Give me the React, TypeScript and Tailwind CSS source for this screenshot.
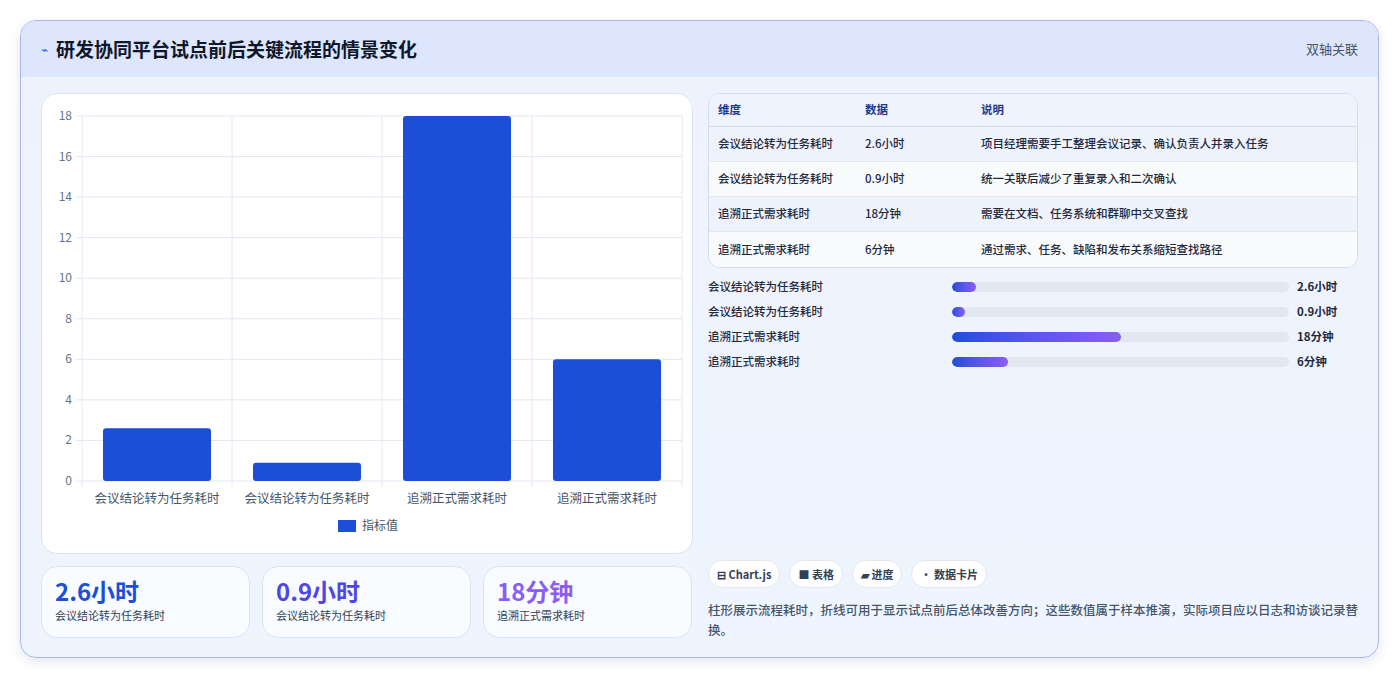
import React from "react";

const rows = [
  ["会议结论转为任务耗时", "2.6小时", "项目经理需要手工整理会议记录、确认负责人并录入任务", 2.6],
  ["会议结论转为任务耗时", "0.9小时", "统一关联后减少了重复录入和二次确认", 0.9],
  ["追溯正式需求耗时", "18分钟", "需要在文档、任务系统和群聊中交叉查找", 18],
  ["追溯正式需求耗时", "6分钟", "通过需求、任务、缺陷和发布关系缩短查找路径", 6],
] as const;

function Chart() {
  const L = 40, T = 22, W = 600, H = 365;
  const ticks = [0, 2, 4, 6, 8, 10, 12, 14, 16, 18];
  const y = (v: number) => T + H - (v / 18) * H;
  return (
    <svg width="652" height="460" className="block">
      {ticks.map((t) => (
        <g key={t}>
          <line x1={L - 6} x2={L + W} y1={y(t)} y2={y(t)} stroke="#e2e8f0" />
          <text x={L - 10} y={y(t) + 4} textAnchor="end" fontSize="12" fill="#64748b">{t}</text>
        </g>
      ))}
      {[0, 1, 2, 3, 4].map((i) => (
        <line key={i} x1={L + i * 150} x2={L + i * 150} y1={T} y2={T + H + 6} stroke="#e2e8f0" />
      ))}
      {rows.map((r, i) => (
        <g key={i}>
          <rect x={L + i * 150 + 21} y={y(r[3])} width={108} height={T + H - y(r[3])} rx="3" fill="#1d4ed8" />
          <text x={L + i * 150 + 75} y={409} textAnchor="middle" fontSize="12.5" fill="#475569">{r[0]}</text>
        </g>
      ))}
      <rect x={296} y={426} width={18} height={12} fill="#1d4ed8" />
      <text x={320} y={436} fontSize="12" fill="#475569">指标值</text>
    </svg>
  );
}

export default function App() {
  const f = { fontFamily: '"Noto Sans CJK SC", "Noto Sans", sans-serif' };
  return (
    <div style={f} className="w-[1399px] h-[679px] bg-white pt-5 px-5">
      <div className="rounded-2xl border border-[#a9b8e8] bg-gradient-to-b from-[#eef2fd] to-[#eef5ff] overflow-hidden shadow-[0_4px_12px_rgba(30,60,150,0.12)] h-[638px]">
        <div className="h-14 bg-[#dde6fc] flex items-center justify-between px-5">
          <div className="flex items-center gap-2">
            <span className="text-[#2563eb] text-xs">⌁</span>
            <span className="text-[19px] font-bold text-[#0f172a]">研发协同平台试点前后关键流程的情景变化</span>
          </div>
          <span className="text-[13px] text-[#475569]">双轴关联</span>
        </div>
        <div className="flex gap-[15px] px-5 pt-4">
          <div className="w-[652px]">
            <div className="bg-white rounded-2xl border border-[#dbe3f3] h-[461px]"><Chart /></div>
            <div className="flex gap-3 mt-3">
              {[["2.6小时", "会议结论转为任务耗时", "text-[#1d4ed8]"], ["0.9小时", "会议结论转为任务耗时", "text-[#4f46e5]"], ["18分钟", "追溯正式需求耗时", "text-[#8b5cf6]"]].map((s, i) => (
                <div key={i} className="w-[209px] h-[72px] bg-[#f8fbff] rounded-2xl border border-[#dbe3f3] px-[13px] pt-2">
                  <div className={`text-[24px] font-bold leading-8 ${s[2]}`}>{s[0]}</div>
                  <div className="text-[11px] text-[#334155]">{s[1]}</div>
                </div>
              ))}
            </div>
          </div>
          <div className="w-[653px] flex flex-col">
            <div className="rounded-xl border border-[#d3dcef] overflow-hidden bg-white text-[11.5px] text-[#1e293b]">
              <div className="flex h-[33px] items-center bg-[#eef3fd] border-b border-[#d3dcef] font-bold text-[#1e3a8a]">
                <div className="w-[156px] pl-[9px]">维度</div><div className="w-[116px]">数据</div><div>说明</div>
              </div>
              {rows.map((r, i) => (
                <div key={i} className={`flex h-[35px] items-center font-medium ${i % 2 === 0 ? "bg-[#eef2fd]" : "bg-[#f8fafc]"} ${i < 3 ? "border-b border-[#e2e8f0]" : ""}`}>
                  <div className="w-[156px] pl-[9px]">{r[0]}</div><div className="w-[116px]">{r[1]}</div><div>{r[2]}</div>
                </div>
              ))}
            </div>
            <div className="mt-[6px] flex flex-col">
              {rows.map((r, i) => (
                <div key={i} className="flex items-center h-[25px] text-[11.5px] font-medium text-[#1e293b]">
                  <div className="w-[244px]">{r[0]}</div>
                  <div className="w-[337px] h-[10px] rounded-full bg-[#e2e8f0] overflow-hidden">
                    <div className="h-full rounded-full bg-gradient-to-r from-[#1d4ed8] to-[#8b5cf6]" style={{ width: `${Math.max((r[3] / 36) * 100, 4)}%` }} />
                  </div>
                  <div className="ml-2 font-bold">{r[1]}</div>
                </div>
              ))}
            </div>
            <div className="flex-1" />
            <div className="mt-[186px] flex gap-[9px]">
              {["⊟ Chart.js", "■ 表格", "▰ 进度", "• 数据卡片"].map((c) => (
                <span key={c} className="h-7 px-2 rounded-full bg-white border border-[#e2e8f0] text-[11px] font-bold text-[#334155] flex items-center">{c}</span>
              ))}
            </div>
            <p className="mt-3 text-[12.5px] leading-5 text-[#475569] font-medium">柱形展示流程耗时，折线可用于显示试点前后总体改善方向；这些数值属于样本推演，实际项目应以日志和访谈记录替换。</p>
          </div>
        </div>
      </div>
    </div>
  );
}
